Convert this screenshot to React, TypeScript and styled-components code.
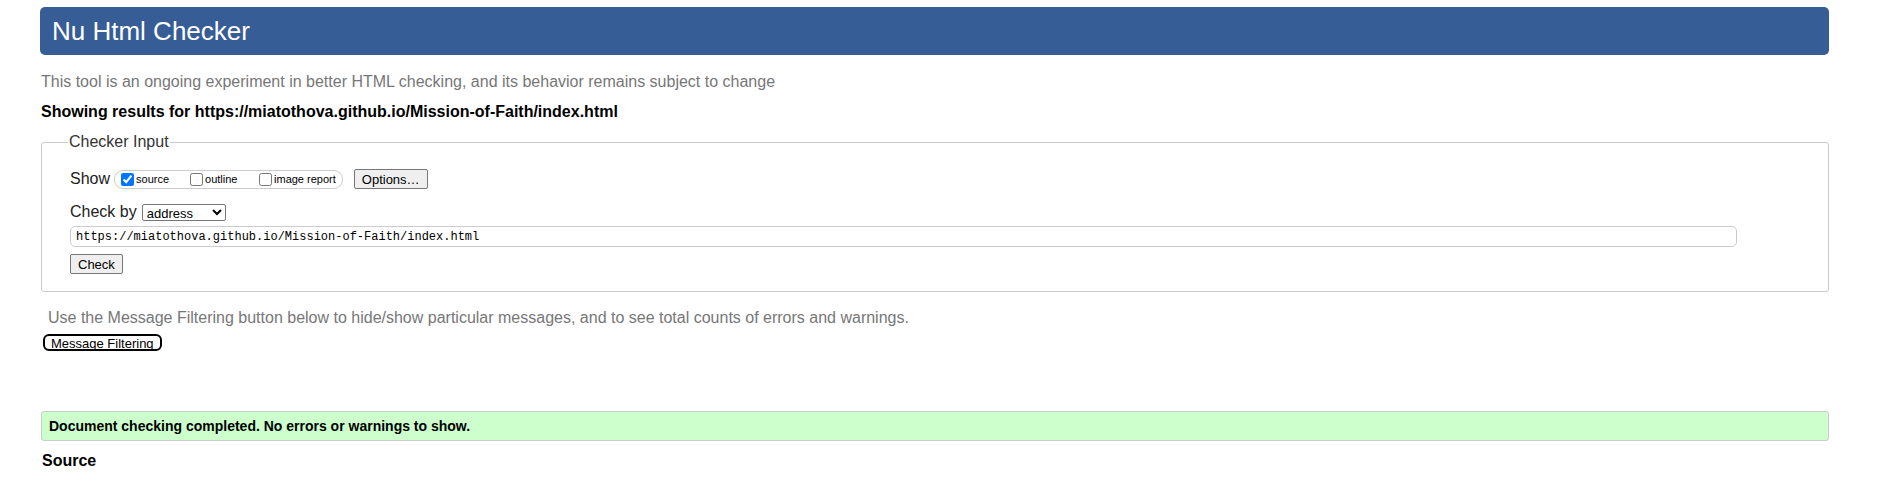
import React from 'react';
import styled, { createGlobalStyle } from 'styled-components';

const GlobalStyle = createGlobalStyle`
    html, body {
        margin: 0;
        padding: 0;
        background: #fff;
    }
    body {
        font-family: "Liberation Sans", Arial, sans-serif;
        color: #000;
    }
`;

const Page = styled.div`
    display: flex;
    flex-direction: column;
    padding: 7px 48px 0 40px;
`;

const Header = styled.header`
    height: 48px;
    display: flex;
    align-items: center;
    padding: 1px 0 0 12px;
    box-sizing: border-box;
    background: #365d95;
    border-radius: 5px;
    color: #fff;
    font-size: 26px;
`;

const Tagline = styled.p`
    margin: 18px 0 0 1px;
    font-size: 16px;
    color: #777;
`;

const Results = styled.p`
    margin: 12px 0 0 1px;
    font-size: 16px;
    font-weight: bold;
`;

const Fieldset = styled.fieldset`
    margin: 12px 0 0 1px;
    padding: 18px 28px 17px;
    border: 1px solid #ccc;
    border-radius: 3px;
    min-width: 0;
`;

const Legend = styled.legend`
    margin-left: -2px;
    padding: 0 1px;
    font-size: 16px;
    color: #333;
`;

const Row = styled.div<{ $mt?: number }>`
    display: flex;
    align-items: center;
    margin-top: ${p => p.$mt ?? 0}px;
    font-size: 16px;
    color: #222;
`;

const Group = styled.div`
    display: inline-flex;
    align-items: center;
    height: 17px;
    margin-left: 4px;
    padding: 0 6px 0 2px;
    border: 1px solid #ccc;
    border-radius: 9px;
`;

const Choice = styled.label<{ $last?: boolean }>`
    display: inline-flex;
    align-items: center;
    width: ${p => (p.$last ? 'auto' : '69px')};
    font-size: 11px;
    color: #000;

    input {
        width: 13px;
        height: 13px;
        margin: 0 2px 0 4px;
    }
`;

const Button = styled.button<{ $ml?: number }>`
    height: 20px;
    margin-left: ${p => p.$ml ?? 0}px;
    padding: 0 7px;
    font-family: "Liberation Sans", Arial, sans-serif;
    font-size: 13px;
    color: #000;
    background: #efefef;
    border: 1px solid #767676;
    border-radius: 2px;
`;

const Select = styled.select`
    width: 84px;
    height: 17px;
    margin-left: 5px;
    padding: 0;
    font-family: "Liberation Sans", Arial, sans-serif;
    font-size: 13px;
    color: #000;
    border: 1px solid #767676;
    border-radius: 2px;
    background: #fff;
`;

const UrlInput = styled.input`
    box-sizing: border-box;
    width: 1667px;
    height: 21px;
    margin-top: 5px;
    padding: 0 5px;
    font-family: "Liberation Mono", "DejaVu Sans Mono", monospace;
    font-size: 12px;
    color: #000;
    border: 1px solid #ccc;
    border-radius: 5px;
    outline: none;
`;

const Actions = styled.div`
    margin-top: 7px;
`;

const Note = styled.p`
    margin: 17px 0 0 8px;
    font-size: 16px;
    color: #777;
`;

const FilterButton = styled.button`
    align-self: flex-start;
    height: 17px;
    margin: 7px 0 0 3px;
    padding: 0 6px;
    font-family: "Liberation Sans", Arial, sans-serif;
    font-size: 13px;
    color: #000;
    background: #fff;
    border: 2px solid #000;
    border-radius: 6px;
`;

const Success = styled.div`
    display: flex;
    align-items: center;
    height: 28px;
    margin: 60px 0 0 1px;
    padding-left: 7px;
    background: #ccffcc;
    border: 1px solid #ccc;
    border-radius: 3px;
    font-size: 14px;
    font-weight: bold;
`;

const SourceTitle = styled.h2`
    margin: 11px 0 0 2px;
    font-size: 16px;
    font-weight: bold;
`;

const url = 'https://miatothova.github.io/Mission-of-Faith/index.html';

const App = () => {
    return (
        <>
            <GlobalStyle />
            <Page>
                <Header>Nu Html Checker</Header>
                <Tagline>This tool is an ongoing experiment in better HTML checking, and its behavior remains subject to change</Tagline>
                <Results>Showing results for {url}</Results>
                <Fieldset>
                    <Legend>Checker Input</Legend>
                    <Row>
                        Show
                        <Group>
                            <Choice><input type="checkbox" defaultChecked />source</Choice>
                            <Choice><input type="checkbox" />outline</Choice>
                            <Choice $last><input type="checkbox" />image report</Choice>
                        </Group>
                        <Button type="button" $ml={11}>Options…</Button>
                    </Row>
                    <Row $mt={14}>
                        Check by
                        <Select defaultValue="address">
                            <option value="address">address</option>
                            <option value="file">file upload</option>
                            <option value="text">text input</option>
                        </Select>
                    </Row>
                    <UrlInput type="url" defaultValue={url} />
                    <Actions>
                        <Button type="submit">Check</Button>
                    </Actions>
                </Fieldset>
                <Note>Use the Message Filtering button below to hide/show particular messages, and to see total counts of errors and warnings.</Note>
                <FilterButton type="button">Message Filtering</FilterButton>
                <Success>Document checking completed. No errors or warnings to show.</Success>
                <SourceTitle>Source</SourceTitle>
            </Page>
        </>
    );
};

export default App;
